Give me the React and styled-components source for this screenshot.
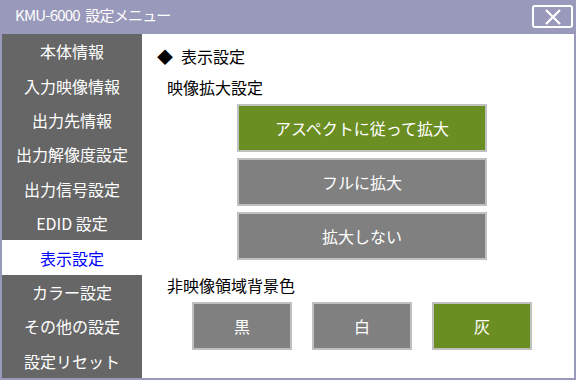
import React from 'react';
import styled, { createGlobalStyle } from 'styled-components';

const GlobalStyle = createGlobalStyle`
    html, body {
        margin: 0;
        padding: 0;
        background: #ffffff;
    }
    * {
        box-sizing: border-box;
    }
`;

const Window = styled.div`
    width: 576px;
    height: 380px;
    display: flex;
    flex-direction: column;
    background: #9999bb;
    padding: 0 2px 2px 2px;
    font-family: "Noto Sans CJK JP", "DejaVu Sans", sans-serif;
    font-size: 16px;
    overflow: hidden;
`;

const TitleBar = styled.header`
    height: 34px;
    display: flex;
    align-items: center;
    justify-content: space-between;
    padding: 0 1px 5px 13px;
    color: #ffffff;
`;

const Title = styled.div`
    font-size: 15px;
    letter-spacing: -0.8px;
    word-spacing: 3px;
`;

const CloseButton = styled.button`
    width: 41px;
    height: 23px;
    border: 2px solid #ffffff;
    border-radius: 3px;
    background: transparent;
    display: flex;
    align-items: center;
    justify-content: center;
    padding: 0;
    margin-top: 4px;
    cursor: pointer;
`;

const Body = styled.div`
    flex: 1;
    display: flex;
    background: #ffffff;
`;

const Sidebar = styled.nav`
    width: 140px;
    display: flex;
    flex-direction: column;
    background: #666666;
`;

const NavItem = styled.div`
    flex: 1;
    display: flex;
    align-items: center;
    justify-content: center;
    color: ${p => (p.$active ? '#0000ff' : '#ffffff')};
    background: ${p => (p.$active ? '#ffffff' : 'transparent')};
    white-space: pre;
`;

const Content = styled.main`
    flex: 1;
    padding: 12px 0 0 15px;
    color: #000000;
`;

const Heading = styled.div`
    height: 20px;
    line-height: 20px;
    display: flex;
    align-items: center;
    gap: 8px;
`;

const Label = styled.div`
    height: 20px;
    line-height: 20px;
    margin: ${p => p.$top}px 0 7px 10px;
`;

const OptionColumn = styled.div`
    display: flex;
    flex-direction: column;
    gap: 6px;
    margin-left: 80px;
`;

const OptionRow = styled.div`
    display: flex;
    gap: 20px;
    margin-left: 35px;
`;

const Option = styled.div`
    width: ${p => p.$w}px;
    height: 48px;
    display: flex;
    align-items: center;
    justify-content: center;
    border: 2px solid #c0c0c0;
    background: ${p => (p.$on ? '#6b8e23' : '#808080')};
    color: #ffffff;
`;

const navItems = [
    '本体情報',
    '入力映像情報',
    '出力先情報',
    '出力解像度設定',
    '出力信号設定',
    'EDID 設定',
    '表示設定',
    'カラー設定',
    'その他の設定',
    '設定リセット',
];

const scaleOptions = [
    { label: 'アスペクトに従って拡大', on: true },
    { label: 'フルに拡大', on: false },
    { label: '拡大しない', on: false },
];

const colorOptions = [
    { label: '黒', on: false },
    { label: '白', on: false },
    { label: '灰', on: true },
];

const App = () => {
    return (
        <>
            <GlobalStyle />
            <Window>
                <TitleBar>
                    <Title>KMU-6000 設定メニュー</Title>
                    <CloseButton aria-label="close">
                        <svg width="18" height="16" viewBox="0 0 18 16">
                            <path d="M2 1 L16 15 M16 1 L2 15" stroke="#ffffff" strokeWidth="2.2" fill="none" />
                        </svg>
                    </CloseButton>
                </TitleBar>
                <Body>
                    <Sidebar>
                        {navItems.map(item => (
                            <NavItem key={item} $active={item === '表示設定'}>{item}</NavItem>
                        ))}
                    </Sidebar>
                    <Content>
                        <Heading>
                            <span>◆</span>
                            <span>表示設定</span>
                        </Heading>
                        <Label $top={11}>映像拡大設定</Label>
                        <OptionColumn>
                            {scaleOptions.map(o => (
                                <Option key={o.label} $w={250} $on={o.on}>{o.label}</Option>
                            ))}
                        </OptionColumn>
                        <Label $top={15}>非映像領域背景色</Label>
                        <OptionRow>
                            {colorOptions.map(o => (
                                <Option key={o.label} $w={100} $on={o.on}>{o.label}</Option>
                            ))}
                        </OptionRow>
                    </Content>
                </Body>
            </Window>
        </>
    );
};

export default App;
